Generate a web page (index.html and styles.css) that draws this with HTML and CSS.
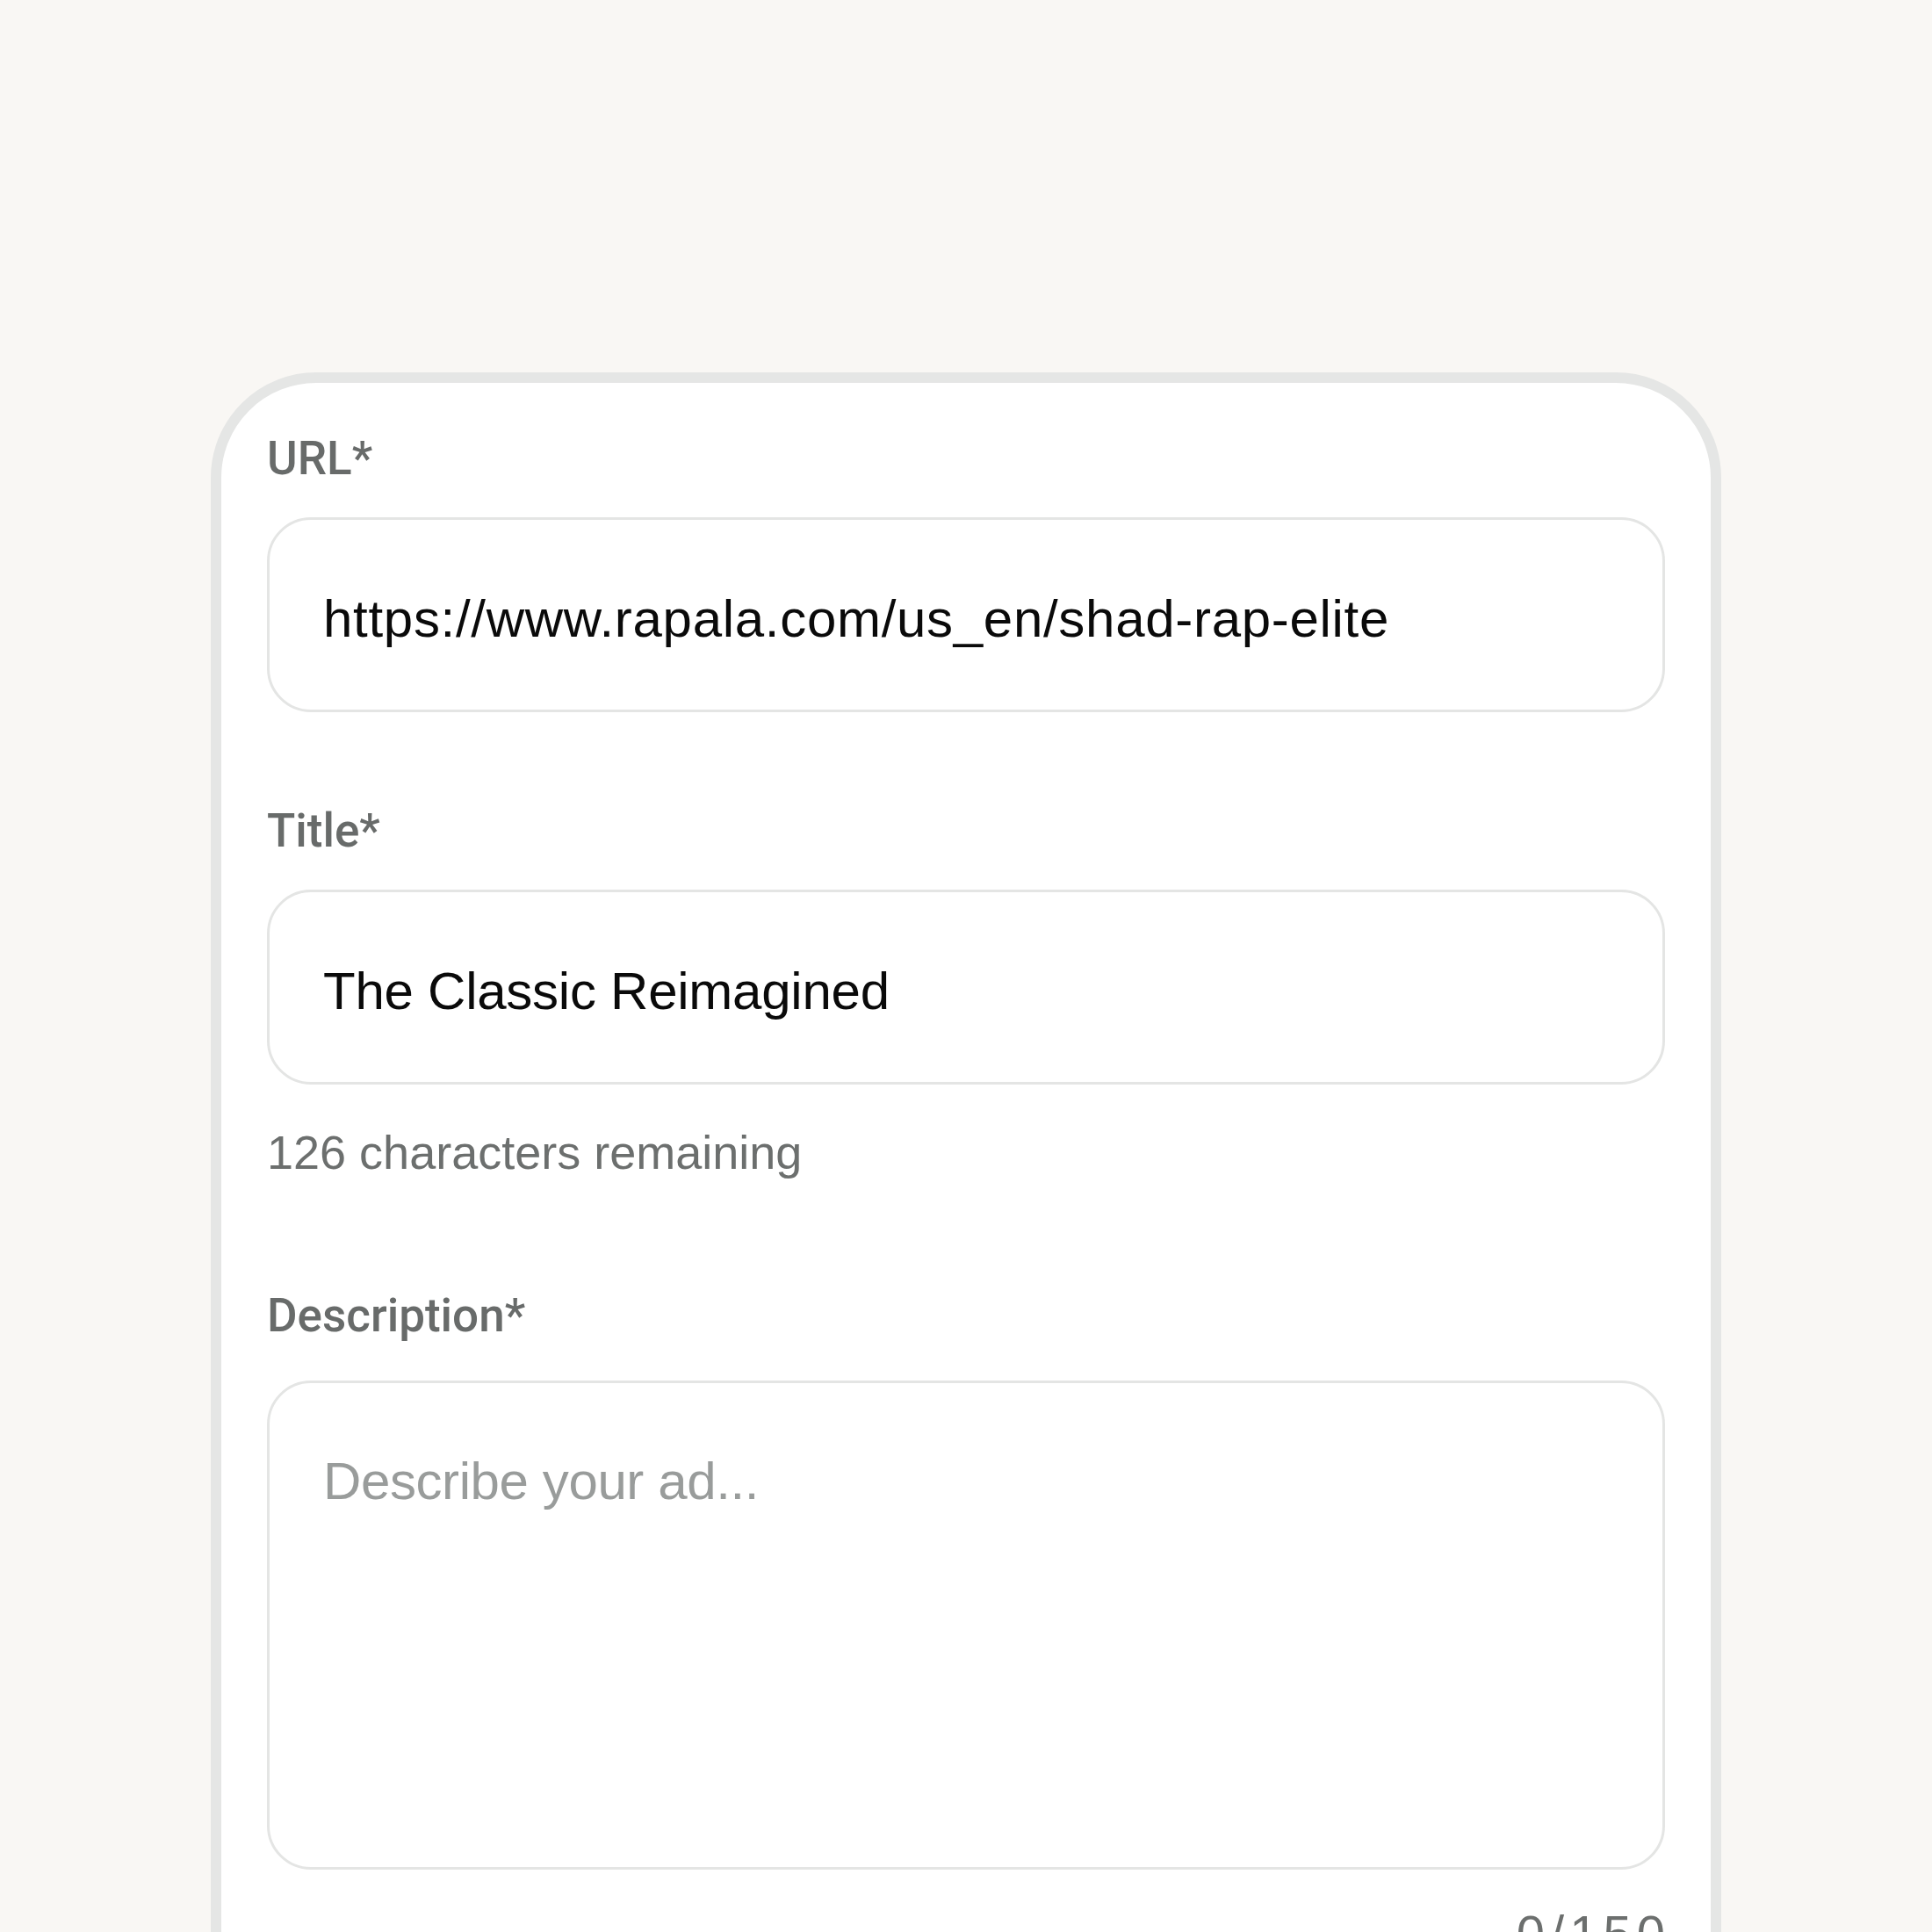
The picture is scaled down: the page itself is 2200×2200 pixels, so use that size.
FILE: index.html
```html
<!DOCTYPE html>
<html lang="en">
<head>
<meta charset="utf-8">
<title>Ad details</title>
<link rel="stylesheet" href="styles.css">
</head>
<body>
<main class="page">
  <form class="card">
    <div class="field field-url">
      <label class="label" for="url">URL*</label>
      <input class="input input-url" id="url" type="text" value="https://www.rapala.com/us_en/shad-rap-elite">
    </div>
    <div class="field field-title">
      <label class="label" for="title">Title*</label>
      <input class="input input-title" id="title" type="text" value="The Classic Reimagined">
      <p class="hint">126 characters remaining</p>
    </div>
    <div class="field field-desc">
      <label class="label label-desc" for="desc">Description*</label>
      <textarea class="textarea" id="desc" placeholder="Describe your ad..."></textarea>
      <p class="counter">0/150</p>
    </div>
  </form>
</main>
</body>
</html>
```

FILE: styles.css
```css
* {
  box-sizing: border-box;
}

html,
body {
  margin: 0;
  padding: 0;
  background: #f9f7f4;
}

body {
  height: 2200px;
  overflow: hidden;
}

.page {
  padding-top: 424px;
  display: flex;
  justify-content: center;
}

.card {
  width: 1720px;
  background: #ffffff;
  border: 12px solid #e5e6e5;
  border-radius: 120px;
  padding: 56px 52px 120px;
  display: flex;
  flex-direction: column;
  margin: 0;
}

.field {
  display: flex;
  flex-direction: column;
}

.field-title {
  margin-top: 105px;
}

.field-desc {
  margin-top: 124px;
}

.label {
  font-family: Roboto, "Liberation Sans", sans-serif;
  font-weight: 500;
  font-size: 53px;
  line-height: 60px;
  color: #686b6a;
  margin-bottom: 37px;
}

.label-desc {
  margin-bottom: 44px;
}

.input,
.textarea {
  display: block;
  width: 100%;
  margin: 0;
  border: 3px solid #e4e5e4;
  border-radius: 50px;
  background: #ffffff;
  font-family: "Liberation Sans", Arial, sans-serif;
  font-size: 60px;
  color: #0a0a0a;
  outline: none;
}

.input {
  height: 222px;
  padding: 8px 61px 0;
}

.input-url {
  letter-spacing: 0.7px;
}

.input-title {
  letter-spacing: -0.25px;
}

.textarea {
  height: 557px;
  padding: 76px 61px 0;
  line-height: 72px;
  letter-spacing: -0.4px;
  resize: none;
  overflow: hidden;
}

.textarea::placeholder {
  color: #999c9b;
  opacity: 1;
}

.hint {
  margin: 45px 0 0;
  font-family: "Liberation Sans", Arial, sans-serif;
  font-size: 54px;
  line-height: 64px;
  color: #6c6f6e;
}

.counter {
  margin: 41px -6px 0 0;
  text-align: right;
  font-family: "Liberation Sans", Arial, sans-serif;
  font-size: 58px;
  line-height: 64px;
  letter-spacing: 6px;
  color: #6c6f6e;
}
```
